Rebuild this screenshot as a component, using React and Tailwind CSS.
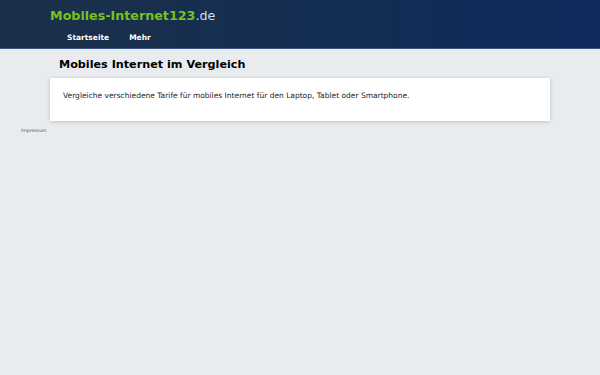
import React from 'react';

const App = () => {
  return (
    <div className="min-h-screen bg-[#e9ecef] font-['DejaVu_Sans',sans-serif] text-black">
      <header className="h-[49px] border-b border-[#3b5682] bg-gradient-to-r from-[#1b3049] to-[#0d2a5b]">
        <div className="mx-auto w-[500px]">
          <div className="pt-[7px] text-[12.7px] leading-[17px]">
            <span className="font-bold text-[#76c21d]">Mobiles-Internet123</span>
            <span className="text-[#d8dde5]">.de</span>
          </div>
          <nav className="mt-[9px] flex gap-[20px] pl-[17px] text-[7.5px] font-bold leading-[10px] text-white">
            <a href="#">Startseite</a>
            <a href="#">Mehr</a>
          </nav>
        </div>
      </header>

      <main className="mx-auto w-[500px]">
        <h1 className="mt-[8px] pl-[9px] text-[11.2px] font-bold leading-[15px]">Mobiles Internet im Vergleich</h1>
        <div className="mt-[6px] h-[43px] bg-white px-[13px] pt-[12px] shadow-[0_1px_4px_rgba(0,0,0,0.18)]">
          <p className="text-[7.5px] leading-[12px] text-[#222]">
            Vergleiche verschiedene Tarife für mobiles Internet für den Laptop, Tablet oder Smartphone.
          </p>
        </div>
      </main>

      <footer className="pl-[21px] pt-[7px] text-[4.6px] leading-[6px]">
        <a href="#" className="text-[#555]">Impressum</a>
      </footer>
    </div>
  );
};

export default App;
